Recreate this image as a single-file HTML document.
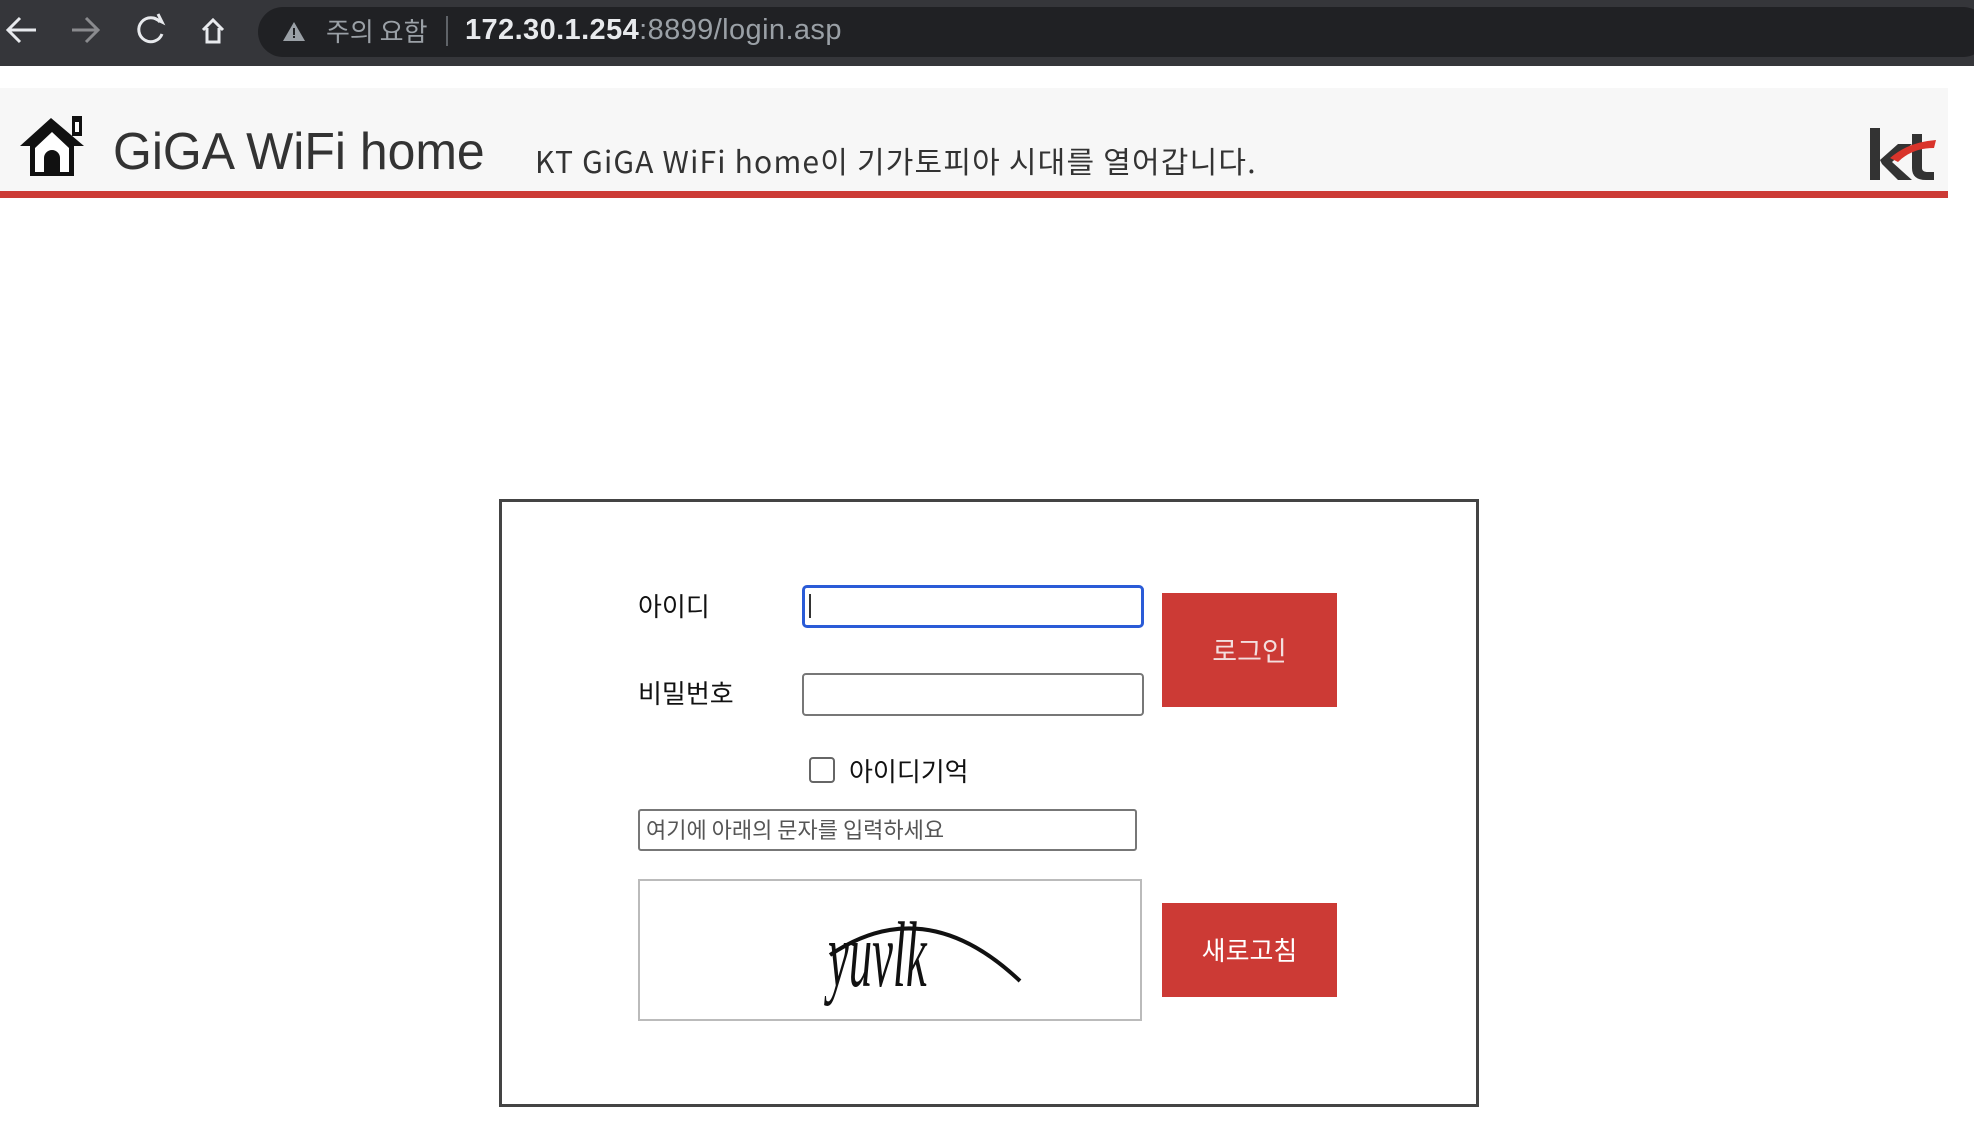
<!DOCTYPE html>
<html><head><meta charset="utf-8"><style>
body{margin:0;width:1974px;height:1130px;background:#fff;position:relative;overflow:hidden;font-family:"Liberation Sans","Noto Sans CJK KR",sans-serif}
.a{position:absolute}
.ko{font-family:"Noto Sans CJK KR","NanumGothic",sans-serif}
</style></head><body>
<div class="a" style="left:0;top:0;width:1974px;height:66px;background:#35363a"></div>
<div class="a" style="left:258px;top:7px;width:1730px;height:50px;border-radius:25px;background:#202124"></div>
<svg class="a" style="left:0;top:0" width="260" height="66" fill="none" stroke-width="3">
<path d="M36 30H8M20 18L8 30L20 42" stroke="#e8eaed"/>
<path d="M72 30H98M86 18L98 30L86 42" stroke="#8a8b8e"/>
<path d="M160 22A12 12 0 1 0 162 34" stroke="#e8eaed"/><path d="M154 18L162 22L158 14" stroke="#e8eaed"/>
<path d="M203 30L213 20L223 30M207 28V42H219V28" stroke="#e8eaed"/>
</svg>
<svg class="a" style="left:282px;top:20px" width="24" height="22"><path d="M12 2L23 21H1Z" fill="#9aa0a6"/><rect x="11" y="8" width="2" height="7" fill="#202124"/><rect x="11" y="16" width="2" height="2" fill="#202124"/></svg>
<div class="a ko" style="left:326px;top:12px;font-size:26px;color:#9aa0a6">주의 요함</div>
<div class="a" style="left:446px;top:16px;width:2px;height:30px;background:#5f6368"></div>
<div class="a" style="left:465px;top:14px;font-size:29px;color:#e8eaed;letter-spacing:0.4px"><b style="font-weight:600">172.30.1.254</b><span style="color:#9aa0a6">:8899/login.asp</span></div>

<div class="a" style="left:0;top:88px;width:1948px;height:103px;background:#f7f7f7"></div>
<div class="a" style="left:0;top:191px;width:1948px;height:7px;background:#cc3a35"></div>
<svg class="a" style="left:18px;top:114px" width="72" height="64">
<path d="M2 32L33 4L66 32H56V62H12V32Z" fill="#111"/>
<path d="M17 34L34 18L51 34V58H17Z" fill="#fff"/>
<path d="M26 58V44A8 8 0 0 1 42 44V58Z" fill="#111"/>
<rect x="54" y="2" width="10" height="20" fill="#111"/><rect x="57" y="8" width="4" height="10" fill="#fff"/>
</svg>
<div class="a" style="left:113px;top:122px;font-size:52px;color:#333;transform:scaleX(0.96);transform-origin:left">GiGA WiFi home</div>
<div class="a ko" style="left:535px;top:138px;font-size:30px;color:#333;letter-spacing:1.2px">KT GiGA WiFi home이 기가토피아 시대를 열어갑니다.</div>
<svg class="a" style="left:1868px;top:128px" width="70" height="56">
<path d="M2 0H12V52H2ZM12 32L30 16H44L24 34L44 52H30L14 36Z" fill="#333"/>
<path d="M44 6H54V40Q54 44 60 44H66V52H58Q44 52 44 40Z" fill="#333"/>
<path d="M22 30Q40 14 68 12L66 20Q44 20 30 34Z" fill="#d9342b"/>
</svg>

<div class="a" style="left:499px;top:499px;width:974px;height:602px;border:3px solid #444"></div>
<div class="a ko" style="left:638px;top:587px;font-size:26px;color:#111">아이디</div>
<div class="a ko" style="left:638px;top:674px;font-size:26px;color:#111">비밀번호</div>
<div class="a" style="left:802px;top:585px;width:336px;height:37px;border:3px solid #2a5bd7;border-radius:5px"></div>
<div class="a" style="left:809px;top:594px;width:2px;height:24px;background:#333"></div>
<div class="a" style="left:802px;top:673px;width:338px;height:39px;border:2px solid #777;border-radius:4px"></div>
<div class="a ko" style="left:1162px;top:593px;width:175px;height:114px;background:#cc3a35;color:#f3dede;font-size:27px;line-height:114px;text-align:center">로그인</div>
<div class="a" style="left:809px;top:757px;width:22px;height:22px;border:2px solid #666;border-radius:4px"></div>
<div class="a ko" style="left:849px;top:752px;font-size:26px;color:#111">아이디기억</div>
<div class="a" style="left:638px;top:809px;width:495px;height:38px;border:2px solid #777;border-radius:3px"></div>
<div class="a ko" style="left:646px;top:813px;font-size:22px;color:#555">여기에 아래의 문자를 입력하세요</div>
<div class="a" style="left:638px;top:879px;width:500px;height:138px;border:2px solid #bbb"></div>
<svg class="a" style="left:640px;top:881px" width="500" height="140">
<path d="M190 74Q285 10 380 100" stroke="#111" stroke-width="4" fill="none"/>
<text x="0" y="0" font-family="Liberation Serif,serif" font-style="italic" font-size="60" fill="#111" transform="translate(188,105) scale(0.78,1.55)">yuvlk</text>
</svg>
<div class="a ko" style="left:1162px;top:903px;width:175px;height:94px;background:#cc3a35;color:#fff;font-size:26px;line-height:94px;text-align:center">새로고침</div>
</body></html>
